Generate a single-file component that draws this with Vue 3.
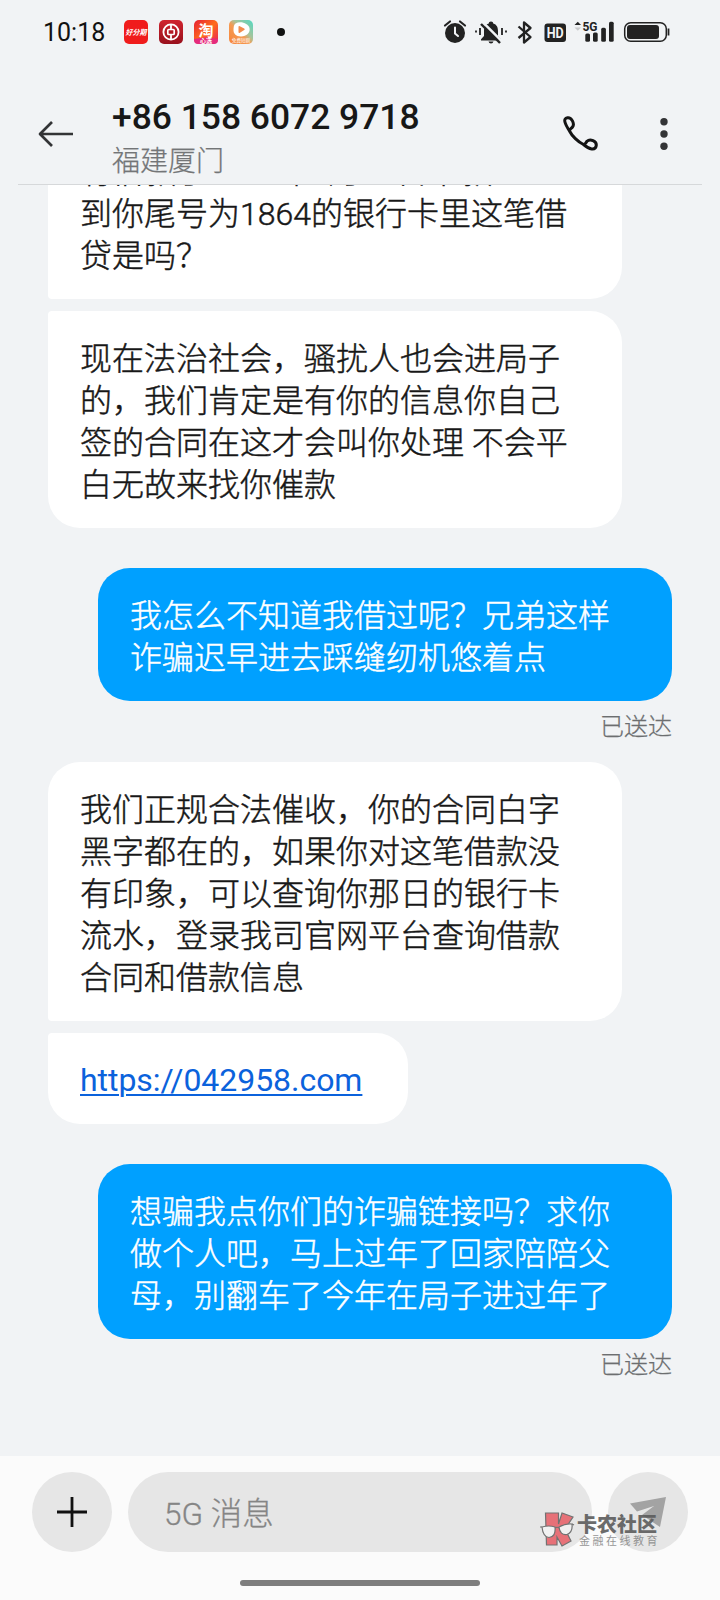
<script setup>
const messages = [
  { side: 'in', shape: 'join-bottom', first: true, lines: ['有借款于2023年1月21日下款', '到你尾号为1864的银行卡里这笔借', '贷是吗？'] },
  { side: 'in', shape: 'join-top', lines: ['现在法治社会，骚扰人也会进局子', '的，我们肯定是有你的信息你自己', '签的合同在这才会叫你处理 不会平', '白无故来找你催款'] },
  { side: 'out', lines: ['我怎么不知道我借过呢？兄弟这样', '诈骗迟早进去踩缝纫机悠着点'], status: '已送达' },
  { side: 'in', shape: 'join-bottom', lines: ['我们正规合法催收，你的合同白字', '黑字都在的，如果你对这笔借款没', '有印象，可以查询你那日的银行卡', '流水，登录我司官网平台查询借款', '合同和借款信息'] },
  { side: 'in', shape: 'join-top', link: 'https://042958.com', lines: [] },
  { side: 'out', lines: ['想骗我点你们的诈骗链接吗？求你', '做个人吧，马上过年了回家陪陪父', '母，别翻车了今年在局子进过年了'], status: '已送达' },
]
</script>

<template>
  <div class="phone">
    <div class="statusbar">
      <span class="clock">10:18</span>
      <svg class="apps" width="132" height="26" viewBox="0 0 132 26">
        <defs>
          <linearGradient id="boc" x1="0" y1="0" x2="0" y2="1"><stop offset="0" stop-color="#d0242f" /><stop offset="1" stop-color="#98101c" /></linearGradient>
          <linearGradient id="tao" x1="0" y1="0" x2="1" y2="1"><stop offset="0" stop-color="#e51d35" /><stop offset=".5" stop-color="#ff6b1a" /><stop offset="1" stop-color="#e8205a" /></linearGradient>
          <linearGradient id="vid" x1="1" y1="0" x2="0" y2="1"><stop offset="0" stop-color="#4fd9c4" /><stop offset=".4" stop-color="#a9c39a" /><stop offset=".55" stop-color="#f59a52" /><stop offset="1" stop-color="#f7853a" /></linearGradient>
        </defs>
        <rect x="0" y="1" width="24" height="24" rx="5" fill="#f01c1c" />
        <text x="12" y="16" font-size="7.4" font-weight="700" font-style="italic" fill="#fff" text-anchor="middle" textLength="21" lengthAdjust="spacingAndGlyphs">好分期</text>
        <rect x="35" y="1" width="24" height="24" rx="5" fill="url(#boc)" />
        <circle cx="47" cy="13" r="7.6" fill="none" stroke="#fff" stroke-width="1.8" />
        <rect x="43.8" y="10.5" width="6.4" height="5" rx="1" fill="none" stroke="#fff" stroke-width="1.7" />
        <path d="M47 5v5M47 16v5" stroke="#fff" stroke-width="1.8" />
        <rect x="70" y="1" width="24" height="24" rx="5" fill="url(#tao)" />
        <path d="M70 20q12-3 24 0v1a4 4 0 0 1-4 4H74a4 4 0 0 1-4-4z" fill="#e52b7c" />
        <text x="82" y="16.500" font-size="15" font-weight="700" fill="#fff" text-anchor="middle">淘</text>
        <text x="82" y="24" font-size="6" font-weight="700" fill="#fff" text-anchor="middle">心选</text>
        <rect x="105" y="1" width="24" height="24" rx="5" fill="url(#vid)" />
        <path d="M111.500 4.500c5-3 13 0 14 4.500s-3 8.500-8.500 8.500-7.500-3-7.500-6.500.5-5.500 2-6.500z" fill="#fff" />
        <path d="M114.500 8q0-1.500 1.300-.8l4.400 2.300q1.300.8 0 1.600l-4.300 2.600q-1.400.6-1.400-.8z" fill="#f38b4b" />
        <text x="117" y="23" font-size="4.500" fill="#fff" text-anchor="middle">免费短剧</text>
      </svg>
      <i class="notice-dot"></i>
      <svg class="system" width="240" height="26" viewBox="0 0 240 26">
        <g fill="#222">
          <circle cx="12" cy="14" r="10" />
          <path d="M2 6.500L7 2.500M22 6.500L17 2.500" stroke="#222" stroke-width="2.200" stroke-linecap="round" />
          <path d="M12 8.500v6l3 2.500" stroke="#f1f3f5" stroke-width="2" fill="none" stroke-linecap="round" />
          <path d="M48 2.500c-1.500 0-2.200.8-2.200 2-3.600 1-4.800 4-4.800 7.500v5l-3 3.200v1.300h20v-1.300l-3-3.200v-5c0-3.500-1.200-6.500-4.800-7.500 0-1.200-.7-2-2.200-2zM45.500 22.500h5q-.5 2-2.500 2t-2.500-2z" />
          <path d="M39.500 3L59.500 23" stroke="#f1f3f5" stroke-width="2.500" />
          <path d="M38 5L57 24" stroke="#222" stroke-width="2.400" />
          <path d="M33 11.500v2M37 9v7M59 9v7M63 11.500v2" stroke="#222" stroke-width="1.800" />
        </g>
        <path d="M75.500 7.500L87.500 18l-6.500 5.500v-20L87.500 9 75.500 19" fill="none" stroke="#222" stroke-width="2.300" stroke-linejoin="round" />
        <rect x="101.500" y="4.500" width="21.500" height="18.500" rx="3" fill="#222" />
        <text x="112.200" y="19.300" font-size="15" font-weight="700" fill="#f1f3f5" text-anchor="middle" textLength="17" lengthAdjust="spacingAndGlyphs">HD</text>
        <path d="M131.500 6L134.800 2.700l3.200 3.300z" fill="#222" />
        <path d="M131.500 8.500L134.800 11.800 138 8.500z" fill="#c9cacc" />
        <text x="139.500" y="12" font-size="13" font-weight="700" fill="#222" textLength="15" lengthAdjust="spacingAndGlyphs">5G</text>
        <g fill="#222">
          <rect x="142.300" y="14.500" width="4.700" height="8.300" rx="1.500" />
          <rect x="150" y="13.500" width="4.700" height="9.300" rx="1.500" />
          <rect x="158.200" y="8.700" width="4.700" height="14.100" rx="1.500" />
          <rect x="166" y="2.700" width="4.700" height="20.100" rx="1.500" />
        </g>
        <rect x="181.700" y="3.700" width="41.600" height="18.600" rx="6" fill="none" stroke="#222" stroke-width="1.500" />
        <rect x="184" y="6" width="32" height="14" rx="3" fill="#222" />
        <path d="M225.500 9.500v7" stroke="#222" stroke-width="1.800" />
      </svg>
    </div>

    <header class="header">
      <svg class="back" width="38" height="28" viewBox="0 0 38 28"><path d="M15 2L3 14l12 12M3 14h33" fill="none" stroke="#333436" stroke-width="2.700" stroke-linejoin="round" /></svg>
      <div class="contact">
        <div class="number">+86 158 6072 9718</div>
        <div class="place">福建厦门</div>
      </div>
      <svg class="call" width="36" height="36" viewBox="0 0 36 36"><path d="M7.500 15C3 8 .5 2.500 5.500 1.700c4-.6 7.500 6 5 9.300-1.200 1.600-3 2-3 4C10 20 16 26 21.500 28.500c1.800-.2 2-1.300 3.500-3.200 3-3 10-.3 9.200 4.500-.8 5-7 3.700-12.700-1.300" fill="none" stroke="#141414" stroke-width="3" stroke-linejoin="round" stroke-linecap="round" /></svg>
      <svg class="more" width="8" height="34" viewBox="0 0 8 34"><g fill="#333436"><circle cx="4" cy="4.700" r="3.700" /><circle cx="4" cy="17" r="3.700" /><circle cx="4" cy="29.300" r="3.700" /></g></svg>
    </header>
    <div class="rule"></div>

    <main class="thread">
      <div v-for="(m, i) in messages" :key="i" class="message" :class="[m.side, m.shape, { first: m.first }]">
        <div class="bubble" :class="{ short: m.link }">
          <a v-if="m.link" class="link">{{ m.link }}</a>
          <div v-for="line in m.lines" :key="line" class="line">{{ line }}</div>
        </div>
        <div v-if="m.status" class="delivered">{{ m.status }}</div>
      </div>
    </main>

    <footer class="composer">
      <div class="row">
        <div class="round"><svg width="30" height="30" viewBox="0 0 30 30"><path d="M15 0v30M0 15h30" stroke="#111" stroke-width="2.800" /></svg></div>
        <div class="field">5G 消息</div>
        <div class="round"><svg width="36" height="30" viewBox="0 0 36 30"><path d="M36 0L0 6.500l7 8L24 9 12 18l18 12z" fill="#a3a3a3" /></svg></div>
      </div>
      <div class="home"></div>
      <div class="watermark">
        <svg width="36" height="36" viewBox="0 0 36 36">
          <path d="M5.500 1h13v11L22 1l11 4-8 12 6 12-9 5-5-9v8H6.500z" fill="#e8656d" stroke="#666" stroke-width="1.200" />
          <path d="M2 15q7-2 13 0 1 10-6 10.500Q3 25 2 15zM19 15q7-4 13-3 1 8-5 10.500-7 1-8-7.500z" fill="#f3f3f3" stroke="#666" stroke-width="1.200" />
          <path d="M15 16q2-1.500 4 0M2 15H0M32 12l2 1" fill="none" stroke="#666" stroke-width="1.200" />
        </svg>
        <div class="mark-text"><div class="mark-name">卡农社区</div><div class="mark-sub">金融在线教育</div></div>
      </div>
    </footer>
  </div>
</template>

<style>
body { background: #f1f3f5; }
</style>

<style scoped>
.phone { width: 720px; height: 1600px; overflow: hidden; display: flex; flex-direction: column; background: #f1f3f5; color: #171717; font-family: Roboto, "Noto Sans CJK SC", sans-serif; }
.statusbar { height: 80px; flex: none; display: flex; align-items: flex-start; padding-left: 43px; box-sizing: border-box; }
.clock { width: 81px; margin-top: 18px; font-size: 25px; line-height: 30px; color: #111; }
.apps { margin-top: 19px; }
.notice-dot { width: 8px; height: 8px; border-radius: 50%; background: #111; margin: 28px 0 0 21px; }
.system { margin: 19px 0 0 158px; }
.header { height: 104px; flex: none; display: flex; align-items: flex-start; }
.back { margin: 40px 0 0 37px; }
.contact { width: 414px; margin-left: 37px; padding-top: 16px; }
.number { height: 42px; line-height: 42px; font-size: 35.400px; font-weight: 500; white-space: nowrap; }
.place { height: 42px; line-height: 42px; margin-top: 3px; font-size: 28px; font-weight: 300; color: #737577; -webkit-text-stroke: .25px currentColor; }
.call { margin: 36px 0 0 36px; }
.more { margin: 37px 0 0 62px; }
.rule { height: 1px; flex: none; margin: 0 18px; background: #d6d8da; }
.thread { height: 1271px; flex: none; overflow: hidden; }
.message { display: flex; flex-direction: column; align-items: flex-start; padding-left: 48px; margin-top: 40px; }
.message.in + .message.in { margin-top: 12px; }
.message.out { align-items: flex-end; padding: 0 48px 0 0; }
.message.out + .message.in { margin-top: 18px; }
.message.first { margin-top: -61px; }
.bubble { box-sizing: border-box; width: 574px; padding: 27px 32px 22px; border-radius: 32px; background: #fff; font-size: 32px; font-weight: 300; line-height: 42px; }
.join-bottom .bubble { border-bottom-left-radius: 4px; }
.join-top .bubble { border-top-left-radius: 4px; }
.out .bubble { background: #00a0ff; color: #fff; }
.line { height: 42px; white-space: nowrap; -webkit-text-stroke: .45px currentColor; }
.bubble.short { width: 360px; padding: 26px 32px 23px; }
.link { display: block; font-weight: 400; color: #0b62dc; letter-spacing: -.04px; text-decoration: underline; text-decoration-thickness: 2px; text-underline-offset: 3px; }
.delivered { height: 36px; line-height: 36px; margin-top: 8px; margin-bottom: -1px; font-size: 24px; font-weight: 300; color: #6c6e70; -webkit-text-stroke: .25px currentColor; }
.composer { position: relative; flex: 1; background: #fbfbfb; }
.row { display: flex; gap: 16px; padding: 16px 32px 0; }
.round { width: 80px; height: 80px; border-radius: 50%; background: #e6e6e6; display: flex; align-items: center; justify-content: center; }
.field { flex: 1; height: 80px; line-height: 85px; border-radius: 40px; background: #e6e6e6; box-sizing: border-box; padding-left: 36px; font-size: 31.500px; font-weight: 300; color: #858585; -webkit-text-stroke: .3px currentColor; }
.home { width: 240px; height: 6px; margin: 28px auto 0; border-radius: 3px; background: #7e7e7e; }
.watermark { position: absolute; left: 540px; top: 56px; display: flex; opacity: .9; }
.mark-text { margin-left: 1px; color: #5c5c5c; }
.mark-name { margin-top: 1px; font-size: 20px; line-height: 24px; font-weight: 900; white-space: nowrap; }
.mark-sub { font-size: 11px; line-height: 12px; margin: -1px 0 0 2px; letter-spacing: 2.500px; white-space: nowrap; color: #8b8b8b; }
</style>
